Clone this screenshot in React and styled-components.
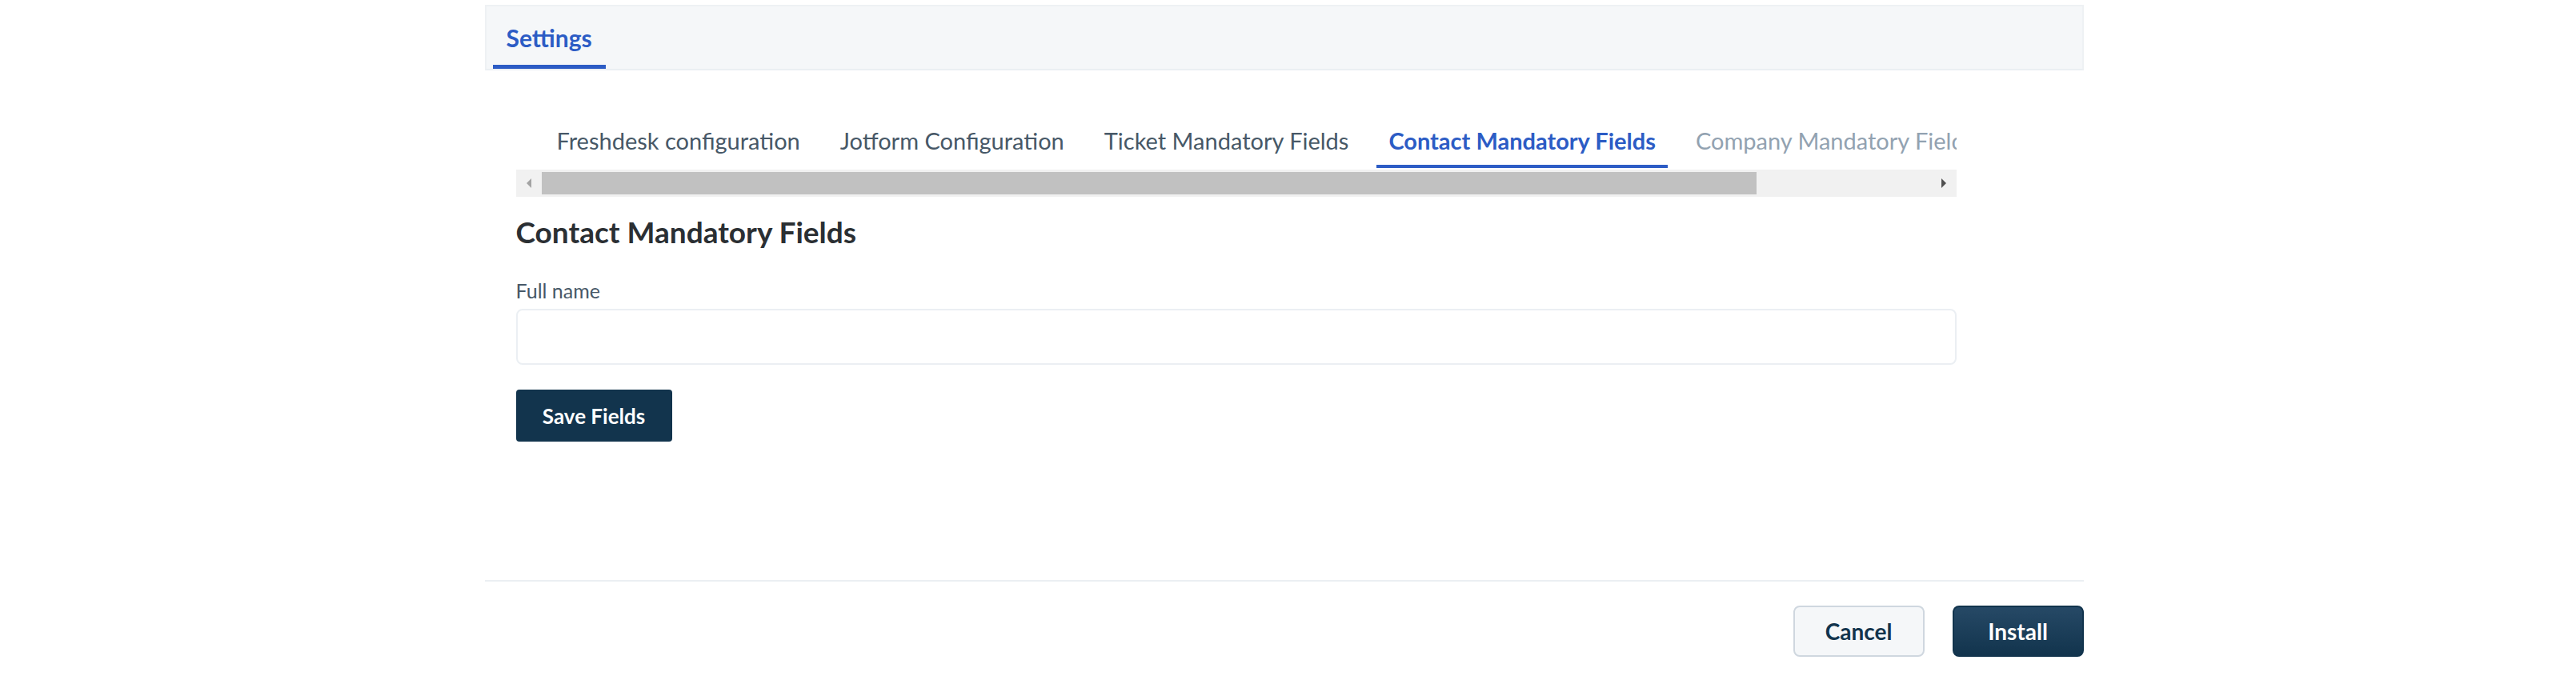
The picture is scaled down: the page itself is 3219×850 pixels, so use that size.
import React from 'react';
import styled, { createGlobalStyle } from 'styled-components';

const GlobalStyle = createGlobalStyle`
  html, body {
    margin: 0;
    padding: 0;
    background: #ffffff;
    font-family: Lato, "Noto Sans", "Open Sans", sans-serif;
  }
`;

const Page = styled.div`
  padding-right: 10px;
`;

const Frame = styled.div`
  width: 1998px;
  margin: 0 auto;
  padding-top: 6px;
`;

const Header = styled.div`
  display: flex;
  align-items: stretch;
  height: 82px;
  box-sizing: border-box;
  padding-left: 8px;
  background: #f5f7f9;
  border: 2px solid #eef1f4;
  border-bottom: 2px solid #ebeff3;
`;

const HeaderTab = styled.div`
  display: flex;
  align-items: center;
  padding: 0 17px;
  font-size: 30px;
  font-weight: 700;
  color: #2c5cc5;
  border-bottom: 5px solid #2c5cc5;
  padding-top: 5px;
`;

const Body = styled.div`
  width: 1800px;
  padding: 52px 0 0 39px;
`;

// the tab list runs wider than its box and is cut at the right edge, as in the app
const TabStrip = styled.div`
  display: flex;
  gap: 20px;
  height: 70px;
  padding-left: 36px;
  overflow: hidden;
  white-space: nowrap;
`;

const Tab = styled.div`
  display: flex;
  align-items: center;
  padding: 0 15px;
  box-sizing: border-box;
  font-size: 29px;
  font-weight: ${p => (p.$active ? 700 : 400)};
  color: ${p => (p.$active ? '#2c5cc5' : p.$muted ? '#92a2b1' : '#475867')};
  border-bottom: 4px solid ${p => (p.$active ? '#2c5cc5' : 'transparent')};
  padding-top: 4px;
  flex-shrink: 0;
`;

const Scrollbar = styled.div`
  display: flex;
  align-items: center;
  height: 34px;
  margin-top: 2px;
  background: #f1f1f1;
`;

const Arrow = styled.div`
  width: 32px;
  height: 34px;
  display: flex;
  align-items: center;
  justify-content: center;
  flex-shrink: 0;
`;

const Track = styled.div`
  flex: 1;
  height: 100%;
  display: flex;
  align-items: center;
`;

const Thumb = styled.div`
  width: 1518px;
  height: 28px;
  background: #c1c1c1;
`;

const Heading = styled.h2`
  margin: 22px 0 0;
  font-size: 37px;
  line-height: 44px;
  font-weight: 700;
  color: #2b2f33;
`;

const Label = styled.div`
  margin-top: 35px;
  font-size: 25px;
  line-height: 32px;
  color: #475867;
`;

const Input = styled.div`
  margin-top: 7px;
  height: 70px;
  box-sizing: border-box;
  border: 2px solid #ebeff3;
  border-radius: 8px;
  background: #fff;
`;

const SaveButton = styled.button`
  margin-top: 31px;
  width: 195px;
  height: 65px;
  border: none;
  border-radius: 4px;
  background: #12344d;
  color: #fff;
  font-family: inherit;
  font-size: 26px;
  font-weight: 700;
`;

const Separator = styled.div`
  margin-top: 173px;
  height: 2px;
  background: #ebeff3;
`;

const Footer = styled.div`
  display: flex;
  justify-content: flex-end;
  gap: 35px;
  padding-top: 30px;
`;

const FooterButton = styled.button`
  width: 164px;
  height: 64px;
  border-radius: 8px;
  font-family: inherit;
  font-size: 28px;
  font-weight: 700;
  border: 2px solid ${p => (p.$primary ? '#12344d' : '#cfd7df')};
  background: ${p => (p.$primary ? 'linear-gradient(#264966, #12344d)' : '#f5f7f9')};
  color: ${p => (p.$primary ? '#ffffff' : '#12344d')};
`;

const tabs = [
  { label: 'Freshdesk configuration' },
  { label: 'Jotform Configuration' },
  { label: 'Ticket Mandatory Fields' },
  { label: 'Contact Mandatory Fields', active: true },
  { label: 'Company Mandatory Fields', muted: true },
];

const Triangle = ({ dir }) => (
  <svg width="10" height="14" viewBox="0 0 10 14">
    {dir === 'left' ? (
      <polygon points="8,1 8,13 2,7" fill="#a3a3a3" />
    ) : (
      <polygon points="2,1 2,13 8,7" fill="#505050" />
    )}
  </svg>
);

export default function App() {
  return (
    <Page>
      <GlobalStyle />
      <Frame>
        <Header>
          <HeaderTab>Settings</HeaderTab>
        </Header>
        <Body>
          <TabStrip>
            {tabs.map(t => (
              <Tab key={t.label} $active={t.active} $muted={t.muted}>
                {t.label}
              </Tab>
            ))}
          </TabStrip>
          <Scrollbar>
            <Arrow>
              <Triangle dir="left" />
            </Arrow>
            <Track>
              <Thumb />
            </Track>
            <Arrow>
              <Triangle dir="right" />
            </Arrow>
          </Scrollbar>
          <Heading>Contact Mandatory Fields</Heading>
          <Label>Full name</Label>
          <Input />
          <SaveButton>Save Fields</SaveButton>
        </Body>
        <Separator />
        <Footer>
          <FooterButton>Cancel</FooterButton>
          <FooterButton $primary>Install</FooterButton>
        </Footer>
      </Frame>
    </Page>
  );
}
